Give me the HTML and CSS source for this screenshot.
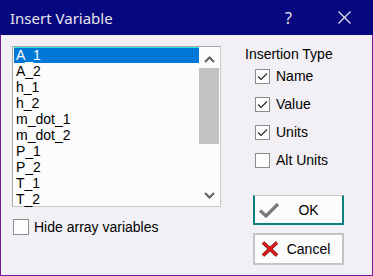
FILE: index.html
```
<!DOCTYPE html>
<html>
<head>
<meta charset="utf-8">
<link rel="stylesheet" href="styles.css">
</head>
<body>
<div class="window">
  <div class="titlebar">
    <span class="title">Insert Variable</span>
    <span class="help">?</span>
    <svg class="close" width="13" height="13" viewBox="0 0 13 13"><path d="M0.5 0.5 L12.5 12.5 M12.5 0.5 L0.5 12.5" stroke="#e8e8f0" stroke-width="1.2" fill="none"/></svg>
  </div>
  <div class="content">
    <div class="left">
      <div class="listbox">
        <div class="items">
          <div class="item selected">A_1</div>
          <div class="item">A_2</div>
          <div class="item">h_1</div>
          <div class="item">h_2</div>
          <div class="item">m_dot_1</div>
          <div class="item">m_dot_2</div>
          <div class="item">P_1</div>
          <div class="item">P_2</div>
          <div class="item">T_1</div>
          <div class="item">T_2</div>
        </div>
        <div class="scrollbar">
          <svg class="arrow up" width="11" height="7" viewBox="0 0 11 7"><path d="M1 6 L5.5 1.5 L10 6" stroke="#606060" stroke-width="2" fill="none"/></svg>
          <div class="thumb"></div>
          <svg class="arrow down" width="11" height="7" viewBox="0 0 11 7"><path d="M1 1 L5.5 5.5 L10 1" stroke="#606060" stroke-width="2" fill="none"/></svg>
        </div>
      </div>
      <label class="check hide">
        <span class="box"></span>
        <span>Hide array variables</span>
      </label>
    </div>
    <div class="right">
      <div class="group-title">Insertion Type</div>
      <div class="opts">
        <label class="check"><span class="box"><svg width="13" height="13" viewBox="0 0 13 13"><path d="M2 6.5 L5 9.5 L11 3.5" stroke="#222" stroke-width="1.1" fill="none"/></svg></span><span>Name</span></label>
        <label class="check"><span class="box"><svg width="13" height="13" viewBox="0 0 13 13"><path d="M2 6.5 L5 9.5 L11 3.5" stroke="#222" stroke-width="1.1" fill="none"/></svg></span><span>Value</span></label>
        <label class="check"><span class="box"><svg width="13" height="13" viewBox="0 0 13 13"><path d="M2 6.5 L5 9.5 L11 3.5" stroke="#222" stroke-width="1.1" fill="none"/></svg></span><span>Units</span></label>
        <label class="check"><span class="box"></span><span>Alt Units</span></label>
      </div>
      <div class="buttons">
        <div class="btn ok">
          <svg class="ico" width="22" height="16" viewBox="0 0 22 16"><path d="M2 8.5 L8 14 L20 2" stroke="#7a7a7a" stroke-width="3.2" fill="none" stroke-linejoin="round"/></svg>
          <span class="label">OK</span>
        </div>
        <div class="btn cancel">
          <svg class="ico" width="18" height="16" viewBox="0 0 18 16"><path d="M2 1.5 L16 14.5 M16 1.5 L2 14.5" stroke="#5a1010" stroke-width="3.6" fill="none"/><path d="M2 1.5 L16 14.5 M16 1.5 L2 14.5" stroke="#f01818" stroke-width="2.2" fill="none"/></svg>
          <span class="label">Cancel</span>
        </div>
      </div>
    </div>
  </div>
</div>
</body>
</html>
```
FILE: styles.css
```
* { box-sizing: border-box; }
html, body { margin: 0; padding: 0; }
body { width: 373px; height: 276px; overflow: hidden; font-family: "Liberation Sans", Arial, sans-serif; }
.window {
  width: 373px; height: 276px;
  background: #f2f0f4;
  border: 1px solid #7a1a9a;
  border-top: none;
  display: flex; flex-direction: column;
}
.titlebar {
  height: 35px; margin: 0 -1px;
  background: #07077f;
  color: #e6e6ee;
  display: flex; align-items: center;
  font-family: "Noto Sans", "Open Sans", sans-serif;
  font-size: 15px;
  padding-left: 10px;
}
.title { flex: 1; }
.help { margin-right: 46px; font-size: 16px; }
.close { margin-right: 22px; }
.content { display: flex; padding: 11px 0 0 11px; }
.left { width: 209px; }
.listbox {
  width: 209px; height: 161px;
  border: 1px solid #a8a8a8;
  border-right-color: #c8c8c8; border-bottom-color: #c8c8c8;
  background: #fcfcfc;
  display: flex;
}
.items { width: 186px; padding-left: 1px; }
.item {
  height: 16px; line-height: 16px;
  font-size: 14px; color: #000;
  padding-left: 2px;
}
.item.selected { background: #0078d7; color: #fff; border-top: 1px solid #30e0e0; line-height: 14px; }
.scrollbar { width: 21px; display: flex; flex-direction: column; align-items: center; }
.arrow.up { margin-top: 9px; }
.thumb { width: 20px; height: 76px; background: #c2c2c2; margin-top: 5px; margin-left: -1px; }
.arrow.down { margin-top: 48px; }
.check { display: flex; align-items: center; font-size: 14px; color: #000; }
.box {
  width: 15px; height: 15px;
  border: 1px solid #8c8c8c;
  background: #fdfdfd;
  display: flex; align-items: center; justify-content: center;
  margin-right: 6px;
}
.hide { margin-top: 12px; margin-left: 1px; }
.hide .box { width: 16px; height: 16px; margin-right: 5px; }
.right { margin-left: 24px; display: flex; flex-direction: column; }
.group-title { font-size: 14px; color: #000; height: 16px; line-height: 16px; margin-top: 0px; }
.opts { margin-left: 10px; margin-top: 6px; display: flex; flex-direction: column; gap: 12px; }
.buttons { margin-left: 8px; margin-top: 27px; display: flex; flex-direction: column; gap: 8px; }
.btn {
  width: 91px; height: 31px;
  background: #fcfcfc;
  display: flex; align-items: center;
  font-size: 14px; color: #000;
  position: relative;
}
.btn.ok { border: 2px solid #0f8080; border-top: 1px solid #c8c8c8; height: 30px; }
.btn.cancel { border: 2px solid #c4c4c4; height: 32px; }
.btn .label { position: absolute; left: 0; right: 0; text-align: center; padding-left: 20px; }
.ok .ico { margin-left: 3px; }
.cancel .ico { margin-left: 6px; }
```
